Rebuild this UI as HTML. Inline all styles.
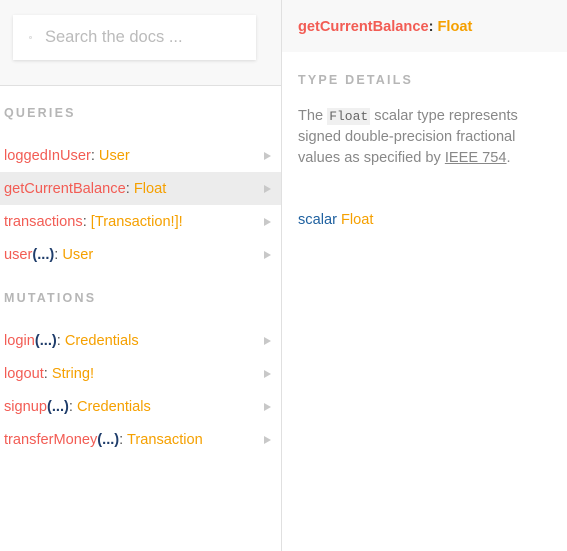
<!DOCTYPE html>
<html><head><style>
*{margin:0;padding:0;box-sizing:border-box}
body{width:567px;height:551px;overflow:hidden;background:#fff;font-family:"Liberation Sans",sans-serif;font-size:14.6px;position:relative}
.left{position:absolute;left:0;top:0;width:282px;height:551px;border-right:1px solid #e0e0e0;background:#fff}
.top{height:86px;background:#f8f8f8;border-bottom:1px solid #e0e0e0;position:relative}
.search{position:absolute;left:13px;top:15px;width:243px;height:45px;background:#fff;box-shadow:0 1px 3px rgba(0,0,0,.12)}
.search span{position:absolute;left:32px;top:13px;color:#bbb;font-size:16.5px}
.search i{position:absolute;left:16px;top:21px;width:3px;height:3px;border:1px solid #ddd;border-radius:50%}
.h{position:absolute;left:4px;font-size:12.5px;font-weight:bold;letter-spacing:2.2px;color:#b6b6b6}
.row{position:absolute;left:0;width:281px;height:33px;line-height:35px;padding-left:4px}
.row.sel{background:#ececec}
.n{color:#f25c54}.t{color:#f5a000}.c{color:#555}.a{color:#1f3d6b;font-weight:bold}
.row b.ar{position:absolute;left:264px;top:13px;width:0;height:0;border-left:7px solid #c8c8c8;border-top:4px solid transparent;border-bottom:4px solid transparent}
.rh{position:absolute;left:282px;top:0;width:285px;height:52px;background:#f8f8f8}
.rh div{position:absolute;left:16px;top:19px;font-weight:bold;font-size:14.6px}
</style></head><body>
<div class="left">
<div class="top"><div class="search"><i></i><span>Search the docs ...</span></div></div>
<div class="h" style="top:106px">QUERIES</div>
<div class="row" style="top:139px"><span class="n">loggedInUser</span><span class="c">: </span><span class="t">User</span><b class="ar"></b></div>
<div class="row sel" style="top:172px"><span class="n">getCurrentBalance</span><span class="c">: </span><span class="t">Float</span><b class="ar"></b></div>
<div class="row" style="top:205px"><span class="n">transactions</span><span class="c">: </span><span class="t">[Transaction!]!</span><b class="ar"></b></div>
<div class="row" style="top:238px"><span class="n">user</span><span class="a">(...)</span><span class="c">: </span><span class="t">User</span><b class="ar"></b></div>
<div class="h" style="top:291px">MUTATIONS</div>
<div class="row" style="top:324px"><span class="n">login</span><span class="a">(...)</span><span class="c">: </span><span class="t">Credentials</span><b class="ar"></b></div>
<div class="row" style="top:357px"><span class="n">logout</span><span class="c">: </span><span class="t">String!</span><b class="ar"></b></div>
<div class="row" style="top:390px"><span class="n">signup</span><span class="a">(...)</span><span class="c">: </span><span class="t">Credentials</span><b class="ar"></b></div>
<div class="row" style="top:423px"><span class="n">transferMoney</span><span class="a">(...)</span><span class="c">: </span><span class="t">Transaction</span><b class="ar"></b></div>
</div>
<div class="rh"><div><span class="n">getCurrentBalance</span><span style="color:#333">: </span><span class="t">Float</span></div></div>
<div class="h" style="left:298px;top:73px">TYPE DETAILS</div>
<div style="position:absolute;left:298px;top:106px;width:250px;color:#888;line-height:21px;font-size:14.6px">The <code style="font-family:'Liberation Mono',monospace;background:#f0f0f0;color:#666;padding:1px 2px;font-size:13px">Float</code> scalar type represents signed double-precision fractional values as specified by <u>IEEE 754</u>.</div>
<div style="position:absolute;left:298px;top:212px"><span style="color:#1f61a0">scalar</span> <span class="t">Float</span></div>
</body></html>
